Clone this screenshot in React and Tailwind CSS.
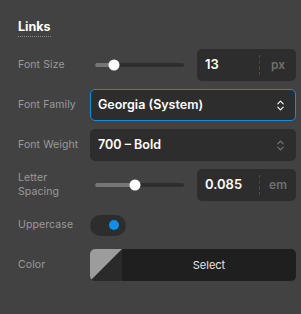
import { ChevronsUpDown } from 'lucide-react';

const font = { fontFamily: 'Inter, "Noto Sans", sans-serif' };

function Slider({ pct }) {
  return (
    <div className="relative ml-[5px] h-[4px] w-[89px] rounded-full bg-[#2e2e2e]">
      <div className="absolute left-0 top-0 h-full rounded-l-full bg-[#767676]" style={{ width: `${pct}%` }} />
      <div
        className="absolute top-1/2 h-[11px] w-[11px] -translate-x-1/2 -translate-y-1/2 rounded-full bg-white"
        style={{ left: `${pct}%` }}
      />
    </div>
  );
}

function UnitInput({ value, unit }) {
  return (
    <div className="ml-auto flex h-[32px] w-[99px] items-center rounded-[5px] bg-[#2d2d2d]">
      <span className="flex-1 pl-[8px] text-[13px] font-semibold text-white">{value}</span>
      <span className="h-[20px] border-l border-dashed border-[#4d4d4d]" />
      <span className="w-[36px] text-center text-[12px] font-semibold text-[#6f6f6f]">{unit}</span>
    </div>
  );
}

function Select({ value, active }) {
  return (
    <div
      className={
        'flex h-[32px] w-[206px] items-center rounded-[5px] bg-[#2d2d2d] pl-[7px] pr-[8px] ' +
        (active ? 'border border-[#1a8ad6]' : 'border border-transparent')
      }
    >
      <span className="flex-1 text-[12.5px] font-semibold text-white">{value}</span>
      <ChevronsUpDown size={13} strokeWidth={2} className={active ? 'text-white' : 'text-[#7a7a7a]'} />
    </div>
  );
}

function Row({ label, children }) {
  return (
    <div className="flex h-[32px] items-center">
      <div className="w-[72px] text-[10.5px] leading-[14px] tracking-[0.1px] text-[#9a9a9a]">{label}</div>
      <div className="flex w-[206px] items-center">{children}</div>
    </div>
  );
}

export default function App() {
  return (
    <div className="h-[314px] w-[301px] bg-[#424242]" style={font}>
      <div className="pl-[18px] pt-[19px]">
        <div className="w-fit border-b border-dotted border-[#8a8a8a] pb-[1px] text-[12.5px] leading-[16px] font-bold text-white">
          Links
        </div>
        <div className="mt-[12px] flex flex-col gap-[8px]">
          <Row label="Font Size">
            <Slider pct={21} />
            <UnitInput value="13" unit="px" />
          </Row>
          <Row label="Font Family">
            <Select value="Georgia (System)" active />
          </Row>
          <Row label="Font Weight">
            <Select value="700 – Bold" />
          </Row>
          <Row label={<>Letter<br />Spacing</>}>
            <Slider pct={45} />
            <UnitInput value="0.085" unit="em" />
          </Row>
          <Row label="Uppercase">
            <div className="flex h-[21px] w-[36px] items-center justify-end rounded-full bg-[#2d2d2d] pr-[7px]">
              <div className="h-[10px] w-[10px] rounded-full bg-[#0f8fe6]" />
            </div>
          </Row>
          <Row label="Color">
            <div className="flex h-[32px] w-[206px] overflow-hidden rounded-[5px] bg-[#1f1f1f]">
              <svg width="32" height="32" viewBox="0 0 32 32" className="shrink-0">
                <rect width="32" height="32" fill="#2a2a2a" />
                <polygon points="0,0 32,0 0,32" fill="#9c9c9c" />
              </svg>
              <span className="flex flex-1 items-center justify-center text-[11px] text-[#e6e6e6]">Select</span>
            </div>
          </Row>
        </div>
      </div>
    </div>
  );
}
